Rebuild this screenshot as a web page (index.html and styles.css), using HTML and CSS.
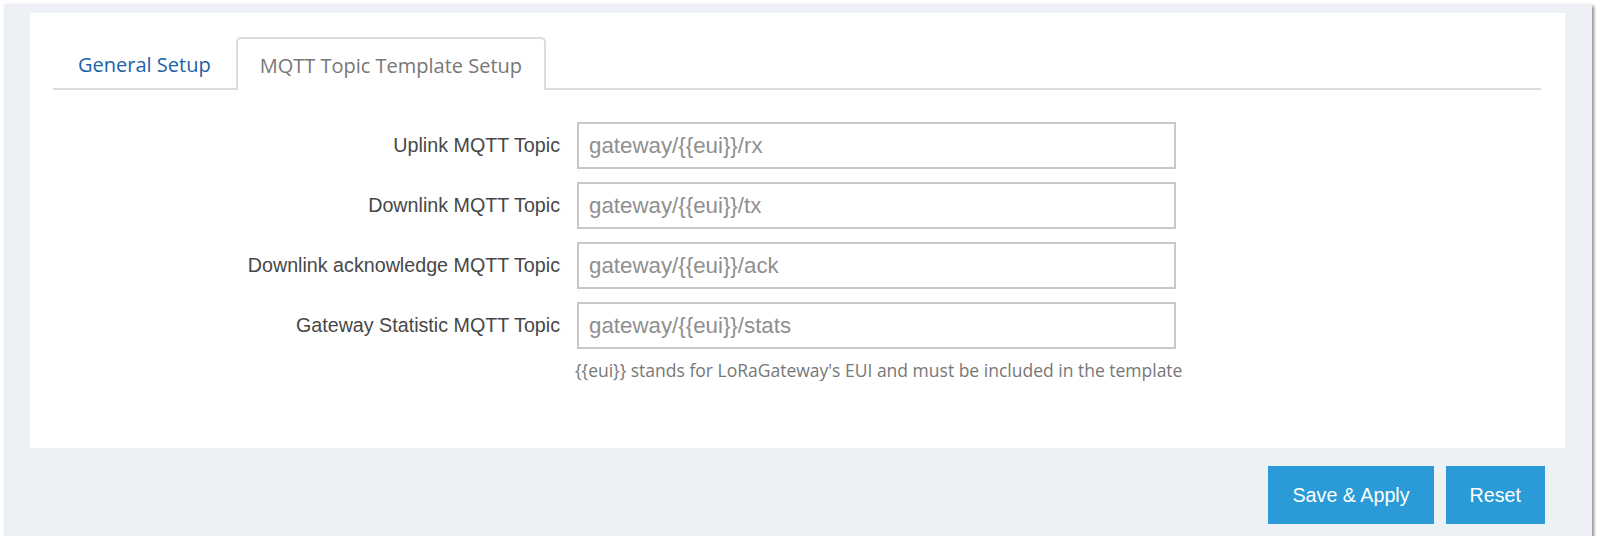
FILE: index.html
```html
<!DOCTYPE html>
<html>
<head>
<meta charset="utf-8">
<link rel="stylesheet" href="styles.css">
</head>
<body>
<div class="frame">
  <div class="card">
    <div class="tabs">
      <div class="tab">General Setup</div>
      <div class="tab active">MQTT Topic Template Setup</div>
    </div>
    <div class="form">
      <label class="label">Uplink MQTT Topic</label>
      <input class="field" type="text" placeholder="gateway/{{eui}}/rx">
      <label class="label">Downlink MQTT Topic</label>
      <input class="field" type="text" placeholder="gateway/{{eui}}/tx">
      <label class="label">Downlink acknowledge MQTT Topic</label>
      <input class="field" type="text" placeholder="gateway/{{eui}}/ack">
      <label class="label">Gateway Statistic MQTT Topic</label>
      <input class="field" type="text" placeholder="gateway/{{eui}}/stats">
      <div class="spacer"></div>
      <div class="help">{{eui}} stands for LoRaGateway's EUI and must be included in the template</div>
    </div>
  </div>
  <div class="actions">
    <button class="btn">Save &amp; Apply</button>
    <button class="btn">Reset</button>
  </div>
</div>
</body>
</html>
```
FILE: styles.css
```css
html, body {
  margin: 0;
  padding: 0;
  background: #ffffff;
}
body {
  padding: 4px 0 0 4px;
}
.frame {
  width: 1588px;
  height: 532px;
  box-sizing: border-box;
  background: #edf0f5;
  box-shadow: 2px 2px 3px rgba(0, 0, 0, 0.45);
  padding: 9px 0 0 26px;
}
.card {
  width: 1535px;
  height: 435px;
  box-sizing: border-box;
  background: #ffffff;
  padding: 24px 24px 0 23px;
}
.tabs {
  display: flex;
  align-items: flex-end;
  gap: 0;
  border-bottom: 2px solid #dcdcdc;
  height: 51px;
}
.tab {
  font-family: "Open Sans", "Noto Sans", sans-serif;
  font-size: 20px;
  color: #1d5fa8;
  padding: 0 25px;
  height: 51px;
  line-height: 55px;
  box-sizing: border-box;
}
.tab.active {
  color: #777777;
  background: #ffffff;
  border: 2px solid #dcdcdc;
  border-bottom: none;
  border-radius: 5px 5px 0 0;
  height: 53px;
  margin-bottom: -2px;
  padding: 0 22px;
  line-height: 53px;
}
.form {
  display: grid;
  grid-template-columns: 507px 599px;
  column-gap: 17px;
  row-gap: 13px;
  margin-top: 32px;
  align-items: center;
}
.label {
  font-family: "Liberation Sans", Arial, sans-serif;
  font-size: 19.7px;
  color: #474747;
  text-align: right;
}
.field {
  height: 47px;
  box-sizing: border-box;
  border: 2px solid #c8c8c8;
  padding: 0 10px;
  font-family: "Liberation Sans", Arial, sans-serif;
  font-size: 22.3px;
  color: #555555;
  outline: none;
  margin: 0;
  width: 599px;
}
.field::placeholder {
  color: #8f8f8f;
}
.help {
  font-family: "Open Sans", "Noto Sans", sans-serif;
  font-size: 17.5px;
  color: #777777;
  white-space: nowrap;
  margin-top: -4px;
  margin-left: -2px;
}
.actions {
  display: flex;
  justify-content: flex-end;
  gap: 12px;
  padding: 18px 47px 0 0;
}
.btn {
  font-family: "Liberation Sans", Arial, sans-serif;
  font-size: 19.7px;
  color: #ffffff;
  background: #2a9bd6;
  border: none;
  height: 58px;
  padding: 0 24px;
  margin: 0;
  cursor: pointer;
}
```
